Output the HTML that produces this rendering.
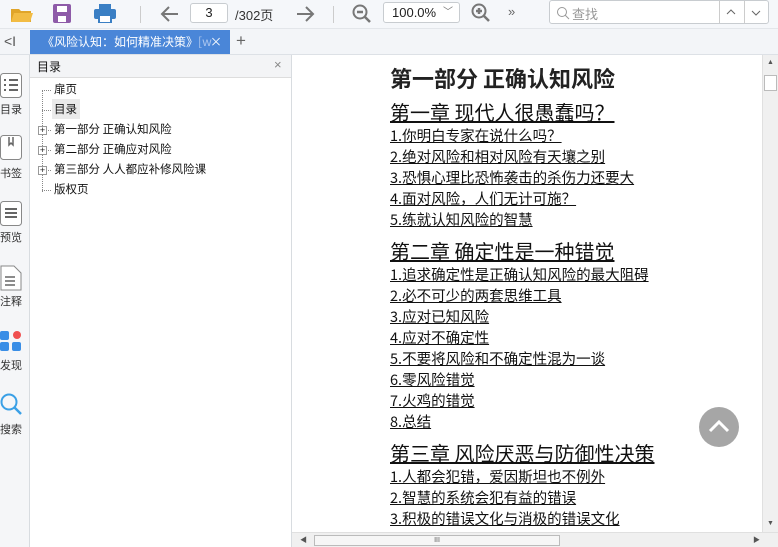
<!DOCTYPE html><html><head><meta charset="utf-8"><style>
*{margin:0;padding:0;box-sizing:border-box}
body{width:778px;height:547px;overflow:hidden;background:#fff;font-family:"Liberation Sans","Noto Sans CJK SC",sans-serif;position:relative;font-size:12px;color:#222}
.abs{position:absolute}
.tb{left:0;top:0;width:778px;height:29px;background:#f5f7fa;border-bottom:1px solid #e3e6ea}
.tabbar{left:0;top:29px;width:778px;height:26px;background:#f3f5f8;border-bottom:1px solid #dde1e6}
.rail{left:0;top:55px;width:30px;height:492px;background:#f5f6f8;border-right:1px solid #d8dce0}
.toc{left:30px;top:55px;width:262px;height:492px;background:#fff;border-right:1px solid #d8dce0}
.c a{position:absolute;left:390px;color:#111;text-decoration:underline;white-space:nowrap;font-family:"Noto Sans CJK SC",sans-serif}
.i{font-size:14.5px;line-height:16px}
.h{font-size:20px;line-height:22px}
.rl{position:absolute;left:0;width:22px;font-size:11px;color:#333;text-align:center}
.t{position:absolute;font-size:11.5px;color:#111;font-family:"Noto Sans CJK SC",sans-serif}
</style></head><body>
<div class="abs tb">
 <svg class="abs" style="left:10px;top:4px" width="24" height="20"><path d="M1 5h8l2 2h10v11H1z" fill="#e0a52a"/><path d="M4 9h19l-3 9H1z" fill="#f2bc44"/></svg>
 <svg class="abs" style="left:53px;top:4px" width="18" height="19"><rect x="0" y="0" width="18" height="19" rx="2" fill="#8e5ba8"/><rect x="4" y="2" width="10" height="6" fill="#fff"/><rect x="5" y="12" width="8" height="6" fill="#fff"/></svg>
 <svg class="abs" style="left:94px;top:4px" width="22" height="19"><rect x="5" y="0" width="12" height="5" fill="#3a7fc4"/><rect x="0" y="5" width="22" height="10" rx="2" fill="#3a7fc4"/><rect x="5" y="11" width="12" height="8" fill="#fff" stroke="#3a7fc4" stroke-width="2"/></svg>
 <div class="abs" style="left:140px;top:6px;width:1px;height:17px;background:#ccc"></div>
 <svg class="abs" style="left:160px;top:5px" width="20" height="18"><path d="M18 9H3M9 2L2 9l7 7" stroke="#777" stroke-width="2" fill="none"/></svg>
 <div class="abs" style="left:190px;top:3px;width:38px;height:20px;border:1px solid #c8ccd0;border-radius:3px;background:#fff;text-align:center;font-size:13px;line-height:18px">3</div>
 <div class="abs" style="left:235px;top:5px;font-size:13px;color:#333">/302页</div>
 <svg class="abs" style="left:295px;top:5px" width="20" height="18"><path d="M2 9h15M11 2l7 7-7 7" stroke="#777" stroke-width="2" fill="none"/></svg>
 <div class="abs" style="left:333px;top:6px;width:1px;height:17px;background:#ccc"></div>
 <svg class="abs" style="left:352px;top:4px" width="20" height="20"><circle cx="8" cy="8" r="6.5" stroke="#777" stroke-width="2" fill="none"/><path d="M5 8h6M13 13l5 5" stroke="#777" stroke-width="2.5"/></svg>
 <div class="abs" style="left:383px;top:2px;width:77px;height:21px;border:1px solid #c8ccd0;border-radius:3px;background:#fff;font-size:13px;line-height:19px;padding-left:8px">100.0%<span style="position:absolute;right:6px;color:#777;font-size:10px">﹀</span></div>
 <svg class="abs" style="left:471px;top:3px" width="20" height="20"><circle cx="8" cy="8" r="6.5" stroke="#777" stroke-width="2" fill="none"/><path d="M5 8h6M8 5v6M13 13l5 5" stroke="#777" stroke-width="2.5"/></svg>
 <div class="abs" style="left:508px;top:4px;color:#666;font-size:13px">»</div>
 <div class="abs" style="left:549px;top:0;width:220px;height:24px;border:1px solid #c8ccd0;border-radius:3px;background:#fff">
  <svg class="abs" style="left:6px;top:5px" width="14" height="14"><circle cx="6" cy="6" r="4.5" stroke="#999" fill="none"/><path d="M9 9l4 4" stroke="#999"/></svg>
  <span class="abs" style="left:22px;top:3px;color:#999;font-size:13px">查找</span>
  <div class="abs" style="left:169px;top:0;width:1px;height:22px;background:#ccc"></div>
  <div class="abs" style="left:194px;top:0;width:1px;height:22px;background:#ccc"></div>
  <svg class="abs" style="left:176px;top:8px" width="10" height="6"><path d="M1 5l4-4 4 4" stroke="#666" fill="none"/></svg>
  <svg class="abs" style="left:201px;top:9px" width="10" height="6"><path d="M1 1l4 4 4-4" stroke="#666" fill="none"/></svg>
 </div>
</div>
<div class="abs tabbar">
 <div class="abs" style="left:4px;top:4px;font-size:14px;color:#555">&lt;I</div>
 <div class="abs" style="left:30px;top:1px;width:200px;height:24px;background:#4a86d8;color:#fff;font-size:12px;line-height:24px;padding-left:12px;font-family:'Noto Sans CJK SC',sans-serif;white-space:nowrap;overflow:hidden"><span style="display:inline-block;width:170px;overflow:hidden">《风险认知：如何精准决策》<span style="color:#a9c4ee">[w</span></span><span style="position:absolute;right:8px;top:0">×</span></div>
 <div class="abs" style="left:236px;top:2px;font-size:17px;color:#666">+</div>
</div>
<div class="abs rail">
 <svg class="abs" style="left:0;top:18px" width="22" height="26"><rect x="0.5" y="0.5" width="21" height="24" rx="3" fill="#fff" stroke="#888"/><path d="M4 7h2M9 7h9M4 12h2M9 12h9M4 17h2M9 17h9" stroke="#666" stroke-width="2"/></svg>
 <div class="rl" style="top:46px">目录</div>
 <svg class="abs" style="left:0;top:80px" width="22" height="26"><rect x="0.5" y="0.5" width="21" height="24" rx="3" fill="#fff" stroke="#888"/><path d="M9 2v8l2-2 2 2V2" stroke="#666" fill="none" stroke-width="1.5"/></svg>
 <div class="rl" style="top:110px">书签</div>
 <svg class="abs" style="left:0;top:146px" width="22" height="26"><rect x="0.5" y="0.5" width="21" height="24" rx="3" fill="#fff" stroke="#888"/><path d="M5 8h12M5 12h12M5 16h12" stroke="#666" stroke-width="2"/></svg>
 <div class="rl" style="top:174px">预览</div>
 <svg class="abs" style="left:0;top:210px" width="22" height="26"><path d="M1 1h13l7 7v17H1z" fill="#fff" stroke="#888"/><path d="M5 12h10M5 16h10M5 20h10" stroke="#666" stroke-width="1.5"/></svg>
 <div class="rl" style="top:238px">注释</div>
 <svg class="abs" style="left:0;top:274px" width="22" height="22"><rect x="0" y="2" width="9" height="9" rx="2" fill="#3a8ee6"/><circle cx="17" cy="6" r="4" fill="#f05050"/><rect x="0" y="13" width="9" height="9" rx="2" fill="#3a8ee6"/><rect x="12" y="13" width="9" height="9" rx="2" fill="#3a8ee6"/></svg>
 <div class="rl" style="top:302px">发现</div>
 <svg class="abs" style="left:0;top:338px" width="24" height="24"><circle cx="9" cy="9" r="7.5" stroke="#3aa0e6" stroke-width="2" fill="none"/><path d="M14 14l7 7" stroke="#3aa0e6" stroke-width="2.5"/></svg>
 <div class="rl" style="top:366px">搜索</div>
</div>
<div class="abs toc">
 <div class="abs" style="left:0;top:0;width:261px;height:23px;background:#f3f4f6;border-bottom:1px solid #ddd"></div>
 <div class="t" style="left:7px;top:3px;font-size:12px">目录</div>
 <div class="abs" style="left:244px;top:2px;color:#888;font-size:13px">×</div>
 <div class="abs" style="left:12px;top:35px;width:0;height:102px;border-left:1px dotted #888"></div>
 <div class="abs" style="left:12px;top:35px;width:9px;border-top:1px dotted #888"></div>
 <div class="abs" style="left:12px;top:55px;width:9px;border-top:1px dotted #888"></div>
 <div class="abs" style="left:12px;top:75px;width:9px;border-top:1px dotted #888"></div>
 <div class="abs" style="left:12px;top:95px;width:9px;border-top:1px dotted #888"></div>
 <div class="abs" style="left:12px;top:115px;width:9px;border-top:1px dotted #888"></div>
 <div class="abs" style="left:12px;top:135px;width:9px;border-top:1px dotted #888"></div>
 <div class="abs" style="left:22px;top:44px;width:28px;height:20px;background:#eaeaea"></div>
 <div class="t" style="left:24px;top:26px">扉页</div>
 <div class="t" style="left:24px;top:46px">目录</div>
 <div class="t" style="left:24px;top:66px">第一部分 正确认知风险</div>
 <div class="t" style="left:24px;top:86px">第二部分 正确应对风险</div>
 <div class="t" style="left:24px;top:106px">第三部分 人人都应补修风险课</div>
 <div class="t" style="left:24px;top:126px">版权页</div>
 <div class="abs" style="left:8px;top:71px;width:9px;height:9px;border:1px solid #999;background:#fff;font-size:9px;line-height:7px;text-align:center">+</div>
 <div class="abs" style="left:8px;top:91px;width:9px;height:9px;border:1px solid #999;background:#fff;font-size:9px;line-height:7px;text-align:center">+</div>
 <div class="abs" style="left:8px;top:111px;width:9px;height:9px;border:1px solid #999;background:#fff;font-size:9px;line-height:7px;text-align:center">+</div>
</div>
<div class="c">
 <div class="abs" style="left:390px;top:62px;font-size:22px;font-weight:bold;font-family:'Noto Sans CJK SC',sans-serif;white-space:nowrap">第一部分 正确认知风险</div>
 <a class="h" style="top:101px">第一章 现代人很愚蠢吗？</a>
 <a class="i" style="top:128px">1.你明白专家在说什么吗？</a>
 <a class="i" style="top:149px">2.绝对风险和相对风险有天壤之别</a>
 <a class="i" style="top:170px">3.恐惧心理比恐怖袭击的杀伤力还要大</a>
 <a class="i" style="top:191px">4.面对风险，人们无计可施？</a>
 <a class="i" style="top:212px">5.练就认知风险的智慧</a>
 <a class="h" style="top:240px">第二章 确定性是一种错觉</a>
 <a class="i" style="top:267px">1.追求确定性是正确认知风险的最大阻碍</a>
 <a class="i" style="top:288px">2.必不可少的两套思维工具</a>
 <a class="i" style="top:309px">3.应对已知风险</a>
 <a class="i" style="top:330px">4.应对不确定性</a>
 <a class="i" style="top:351px">5.不要将风险和不确定性混为一谈</a>
 <a class="i" style="top:372px">6.零风险错觉</a>
 <a class="i" style="top:393px">7.火鸡的错觉</a>
 <a class="i" style="top:414px">8.总结</a>
 <a class="h" style="top:442px">第三章 风险厌恶与防御性决策</a>
 <a class="i" style="top:469px">1.人都会犯错，爱因斯坦也不例外</a>
 <a class="i" style="top:490px">2.智慧的系统会犯有益的错误</a>
 <a class="i" style="top:511px">3.积极的错误文化与消极的错误文化</a>
</div>
<div class="abs" style="left:699px;top:407px;width:40px;height:40px;border-radius:50%;background:#a6a6a6"><svg width="40" height="40"><path d="M11 24l9-9 9 9" stroke="#fff" stroke-width="3" fill="none"/></svg></div>
<div class="abs" style="left:762px;top:55px;width:16px;height:477px;background:#f0f0f0;border-left:1px solid #e0e0e0">
 <div class="abs" style="left:4px;top:4px;font-size:7px;color:#555">▲</div>
 <div class="abs" style="left:1px;top:20px;width:13px;height:16px;background:#fff;border:1px solid #bbb"></div>
 <div class="abs" style="left:4px;top:465px;font-size:7px;color:#555">▼</div>
</div>
<div class="abs" style="left:292px;top:532px;width:486px;height:15px;background:#f0f0f0;border-top:1px solid #e0e0e0">
 <div class="abs" style="left:8px;top:2px;font-size:7px;color:#555">◀</div>
 <div class="abs" style="left:22px;top:2px;width:246px;height:11px;background:#f6f6f6;border:1px solid #bbb;font-size:7px;text-align:center;line-height:9px;color:#555">III</div>
 <div class="abs" style="left:461px;top:2px;font-size:7px;color:#555">▶</div>
</div>
</body></html>
